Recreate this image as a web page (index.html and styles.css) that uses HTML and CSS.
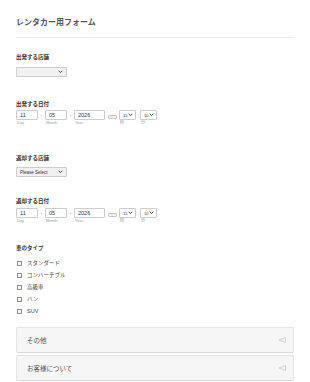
FILE: index.html
```html
<!DOCTYPE html>
<html lang="ja">
<head>
<meta charset="utf-8">
<link rel="stylesheet" href="styles.css">
</head>
<body>
<div class="form">
  <div class="header">
    <h1 class="title">レンタカー用フォーム</h1>
  </div>

  <div class="field f1">
    <div class="label">出発する店舗</div>
    <div class="select store gray"><span></span><svg class="chev" viewBox="0 0 6 4"><path d="M0.8 0.8 L3 3 L5.2 0.8" fill="none" stroke="#333" stroke-width="1.1"/></svg></div>
  </div>

  <div class="field f2">
    <div class="label">出発する日付</div>
    <div class="daterow">
      <div class="col"><div class="input day">11</div><div class="sub">Day</div></div>
      <div class="sep">-</div>
      <div class="col"><div class="input month">05</div><div class="sub">Month</div></div>
      <div class="sep">-</div>
      <div class="col"><div class="input year">2026</div><div class="sub">Year</div></div>
      <div class="cal"><svg viewBox="0 0 9 4" width="9" height="4"><rect x="0.5" y="0.5" width="8" height="3" rx="0.8" fill="#f2f2f2" stroke="#b5b5b5" stroke-width="0.8"/></svg></div>
      <div class="col"><div class="select time"><span>15</span><svg class="chev" viewBox="0 0 6 4"><path d="M0.8 0.8 L3 3 L5.2 0.8" fill="none" stroke="#333" stroke-width="1.1"/></svg></div><div class="sub">時</div></div>
      <div class="sep colon">:</div>
      <div class="col"><div class="select time"><span>10</span><svg class="chev" viewBox="0 0 6 4"><path d="M0.8 0.8 L3 3 L5.2 0.8" fill="none" stroke="#333" stroke-width="1.1"/></svg></div><div class="sub">分</div></div>
    </div>
  </div>

  <div class="field f3">
    <div class="label">返却する店舗</div>
    <div class="select store gray"><span>Please Select</span><svg class="chev" viewBox="0 0 6 4"><path d="M0.8 0.8 L3 3 L5.2 0.8" fill="none" stroke="#333" stroke-width="1.1"/></svg></div>
  </div>

  <div class="field f4">
    <div class="label">返却する日付</div>
    <div class="daterow">
      <div class="col"><div class="input day">11</div><div class="sub">Day</div></div>
      <div class="sep">-</div>
      <div class="col"><div class="input month">05</div><div class="sub">Month</div></div>
      <div class="sep">-</div>
      <div class="col"><div class="input year">2026</div><div class="sub">Year</div></div>
      <div class="cal"><svg viewBox="0 0 9 4" width="9" height="4"><rect x="0.5" y="0.5" width="8" height="3" rx="0.8" fill="#f2f2f2" stroke="#b5b5b5" stroke-width="0.8"/></svg></div>
      <div class="col"><div class="select time"><span>15</span><svg class="chev" viewBox="0 0 6 4"><path d="M0.8 0.8 L3 3 L5.2 0.8" fill="none" stroke="#333" stroke-width="1.1"/></svg></div><div class="sub">時</div></div>
      <div class="sep colon">:</div>
      <div class="col"><div class="select time"><span>10</span><svg class="chev" viewBox="0 0 6 4"><path d="M0.8 0.8 L3 3 L5.2 0.8" fill="none" stroke="#333" stroke-width="1.1"/></svg></div><div class="sub">分</div></div>
    </div>
  </div>

  <div class="field f5">
    <div class="label">車のタイプ</div>
    <ul class="checks">
      <li><span class="box"></span>スタンダード</li>
      <li><span class="box"></span>コンバーチブル</li>
      <li><span class="box"></span>高級車</li>
      <li><span class="box"></span>バン</li>
      <li><span class="box"></span>SUV</li>
    </ul>
  </div>

  <div class="sections">
    <div class="section"><span>その他</span><svg class="tri" viewBox="0 0 8 6"><path d="M7.5 0.5 L0.8 3 L7.5 5.5 Z" fill="none" stroke="#c8c8c8" stroke-width="0.8"/></svg></div>
    <div class="section"><span>お客様について</span><svg class="tri" viewBox="0 0 8 6"><path d="M7.5 0.5 L0.8 3 L7.5 5.5 Z" fill="none" stroke="#c8c8c8" stroke-width="0.8"/></svg></div>
  </div>
</div>
</body>
</html>
```

FILE: styles.css
```css
* { box-sizing: border-box; }
html, body { margin: 0; padding: 0; background: #fff; }
body {
  font-family: "Liberation Sans", "Noto Sans CJK JP", sans-serif;
  color: #2c3345;
}
.form { padding: 0 16px; }
.header {
  padding-top: 18px;
  padding-bottom: 10px;
  border-bottom: 1px solid #ececec;
}
.title {
  margin: 0;
  font-size: 8px;
  line-height: 9px;
  font-weight: bold;
  color: #555;
}
.field { display: flex; flex-direction: column; align-items: flex-start; }
.label {
  font-size: 5.5px;
  line-height: 8px;
  font-weight: bold;
  color: #333;
}
.f1 { padding-top: 15px; }
.f1 .label { margin-bottom: 6px; }
.f2 { padding-top: 23px; }
.f2 .label { margin-bottom: 2px; }
.f3 { padding-top: 28px; }
.f3 .label { margin-bottom: 5px; }
.f4 { padding-top: 20px; }
.f4 .label { margin-bottom: 3px; }
.f5 { padding-top: 20px; }
.f5 .label { margin-bottom: 5px; }

.select {
  display: flex;
  align-items: center;
  justify-content: space-between;
  border: 1px solid #cccccc;
  border-radius: 1px;
  background: #fff;
  font-size: 4.5px;
  color: #333;
}
.select.gray { background: #f1f1f1; }
.select.store { width: 51px; height: 10px; padding: 0 3px 0 3px; }
.select.time { width: 17px; height: 10px; padding: 0 2px 0 3px; font-size: 4px; }
.chev { width: 5px; height: 3.5px; }

.daterow { display: flex; align-items: flex-start; }
.col { display: flex; flex-direction: column; }
.input {
  height: 10px;
  border: 1px solid #cccccc;
  border-radius: 1px;
  font-size: 5.5px;
  line-height: 8px;
  padding-left: 3px;
  color: #333;
  background: #fff;
}
.day { width: 22px; }
.month { width: 22px; }
.year { width: 31px; }
.sep {
  width: 7px;
  height: 10px;
  line-height: 10px;
  text-align: center;
  font-size: 5px;
  color: #777;
}
.sep.colon { width: 4px; }
.cal { width: 14px; height: 10px; display: flex; align-items: flex-end; justify-content: center; padding-bottom: 1px; }
.sub {
  font-size: 4px;
  line-height: 6px;
  color: #999;
  padding-left: 1px;
}

.checks { list-style: none; margin: 0; padding: 0; }
.checks li {
  display: flex;
  align-items: center;
  height: 12px;
  font-size: 5.5px;
  color: #444;
}
.box {
  width: 5px;
  height: 5px;
  border: 0.7px solid #888;
  border-radius: 0.5px;
  margin-left: 1px;
  margin-right: 5px;
}

.sections { padding-top: 10px; display: flex; flex-direction: column; gap: 2px; }
.section {
  height: 26px;
  display: flex;
  align-items: center;
  justify-content: space-between;
  padding: 0 7px 0 10px;
  background: #f6f6f6;
  border: 1px solid #e6e6e6;
  border-bottom-color: #d8d8d8;
  border-radius: 2px;
  font-size: 6.5px;
  color: #555;
}
.tri { width: 8px; height: 6px; }
```
